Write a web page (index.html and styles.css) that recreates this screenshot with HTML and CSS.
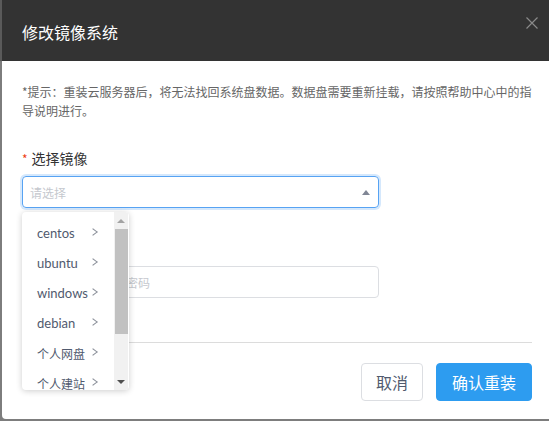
FILE: index.html
```html
<!DOCTYPE html>
<html lang="zh-CN">
<head>
<meta charset="utf-8">
<title>修改镜像系统</title>
<link rel="stylesheet" href="styles.css">
</head>
<body>
<div class="dialog">
  <div class="header">
    <span class="title">修改镜像系统</span>
    <svg class="close" width="12" height="12" viewBox="0 0 12 12"><path d="M0.5 0.5L11.5 11.5M11.5 0.5L0.5 11.5" stroke="#8a8a8a" stroke-width="1.2" fill="none"/></svg>
  </div>
  <div class="body">
    <p class="hint">*提示：重装云服务器后，将无法找回系统盘数据。数据盘需要重新挂载，请按照帮助中心中的指导说明进行。</p>
    <div class="form-item first">
      <div class="label"><span class="req">*</span>选择镜像</div>
      <div class="select focus">
        <span class="placeholder">请选择</span>
        <span class="caret"></span>
      </div>
    </div>
    <div class="form-item second">
      <div class="label"><span class="req">*</span>登录密码</div>
      <div class="select">
        <span class="placeholder">请输入服务器的新密码</span>
      </div>
    </div>
    <div class="divider"></div>
    <div class="footer">
      <button class="btn">取消</button>
      <button class="btn primary">确认重装</button>
    </div>
  </div>
  <div class="dropdown">
    <ul class="menu">
      <li><span>centos</span><i class="chev"></i></li>
      <li><span>ubuntu</span><i class="chev"></i></li>
      <li><span>windows</span><i class="chev"></i></li>
      <li><span>debian</span><i class="chev"></i></li>
      <li class="zh"><span>个人网盘</span><i class="chev"></i></li>
      <li class="zh"><span>个人建站</span><i class="chev"></i></li>
    </ul>
    <div class="scrollbar">
      <span class="sb-up"></span>
      <span class="sb-thumb"></span>
      <span class="sb-fill"></span>
      <span class="sb-down"></span>
    </div>
  </div>
</div>
</body>
</html>
```

FILE: styles.css
```css
html, body {
  margin: 0;
  padding: 0;
}
body {
  width: 549px;
  height: 421px;
  overflow: hidden;
  background: linear-gradient(#5a5a5a 0, #5a5a5a 61px, #7d7d7d 61px);
  font-family: "Noto Sans CJK SC", "Noto Sans", sans-serif;
}
.dialog {
  position: relative;
  margin-left: 2px;
  width: 550px;
  height: 419px;
  background: #fff;
  border-radius: 0 0 4px 4px;
}
.header {
  height: 61px;
  box-sizing: border-box;
  background: #333;
  display: flex;
  align-items: flex-start;
  padding: 0 14px 0 20px;
}
.title {
  color: #fff;
  font-size: 16px;
  line-height: 22px;
  margin-top: 21px;
}
.close {
  margin-left: auto;
  margin-top: 17px;
}
.body {
  padding: 0 20px;
}
.hint {
  margin: 21px -4px 0 0;
  font-size: 12px;
  line-height: 19px;
  color: #666;
}
.form-item {
  display: flex;
  flex-direction: column;
  gap: 7px;
}
.form-item.first {
  margin-top: 28px;
}
.form-item.second {
  margin-top: 30px;
}
.label {
  font-size: 14px;
  line-height: 20px;
  color: #333;
}
.req {
  color: #ed4014;
  font-size: 12px;
  margin-right: 4px;
}
.select {
  width: 357px;
  height: 32px;
  box-sizing: border-box;
  border: 1px solid #dcdee2;
  border-radius: 4px;
  display: flex;
  align-items: center;
  padding: 0 8px 0 7px;
}
.select.focus {
  border-color: #57a3f3;
  box-shadow: 0 0 0 2px rgba(45, 140, 240, 0.2);
}
.placeholder {
  font-size: 12px;
  color: #c5c8ce;
  white-space: nowrap;
}
.caret {
  margin-left: auto;
  width: 0;
  height: 0;
  border-left: 4.5px solid transparent;
  border-right: 4.5px solid transparent;
  border-bottom: 5px solid #808695;
}
.divider {
  margin-top: 44px;
  height: 1px;
  background: #dcdcdc;
}
.footer {
  display: flex;
  justify-content: flex-end;
  gap: 13px;
  margin-top: 20px;
}
.btn {
  height: 38px;
  box-sizing: border-box;
  border: 1px solid #dcdee2;
  border-radius: 4px;
  background: #fff;
  color: #515a6e;
  font-family: inherit;
  font-size: 16px;
  padding: 0 14px;
}
.btn.primary {
  background: #2d9cf0;
  border-color: #2d9cf0;
  color: #fff;
  padding: 0 15px;
}
.dropdown {
  position: absolute;
  left: 20px;
  top: 212px;
  width: 107px;
  height: 178px;
  background: #fff;
  border-radius: 4px;
  box-shadow: 0 1px 6px rgba(0, 0, 0, 0.2);
  display: flex;
  overflow: hidden;
}
.menu {
  list-style: none;
  margin: 0;
  padding: 6px 0 0;
  flex: 1;
}
.menu li {
  height: 30px;
  display: flex;
  align-items: center;
  padding-left: 15px;
  font-family: Lato, "Noto Sans CJK SC", sans-serif;
  font-size: 13px;
  color: #515a6e;
}
.menu li.zh {
  font-family: "Noto Sans CJK SC", sans-serif;
  font-size: 12px;
}
.menu li span {
  width: 53px;
  white-space: nowrap;
}
.chev {
  width: 5px;
  height: 5px;
  border-top: 1px solid #8a8f99;
  border-right: 1px solid #8a8f99;
  transform: rotate(45deg) skew(-8deg, -8deg);
  margin-top: -3px;
}
.scrollbar {
  width: 14px;
  margin-right: 1px;
  background: #f1f1f1;
  display: flex;
  flex-direction: column;
  align-items: center;
}
.sb-up, .sb-down {
  height: 17px;
  display: flex;
  align-items: center;
  justify-content: center;
  width: 100%;
}
.sb-up::after {
  content: "";
  border-left: 4px solid transparent;
  border-right: 4px solid transparent;
  border-bottom: 4px solid #a3a3a3;
}
.sb-down::after {
  content: "";
  border-left: 4px solid transparent;
  border-right: 4px solid transparent;
  border-top: 4px solid #505050;
}
.sb-thumb {
  width: 13px;
  height: 105px;
  background: #c1c1c1;
}
.sb-fill {
  flex: 1;
}
```
